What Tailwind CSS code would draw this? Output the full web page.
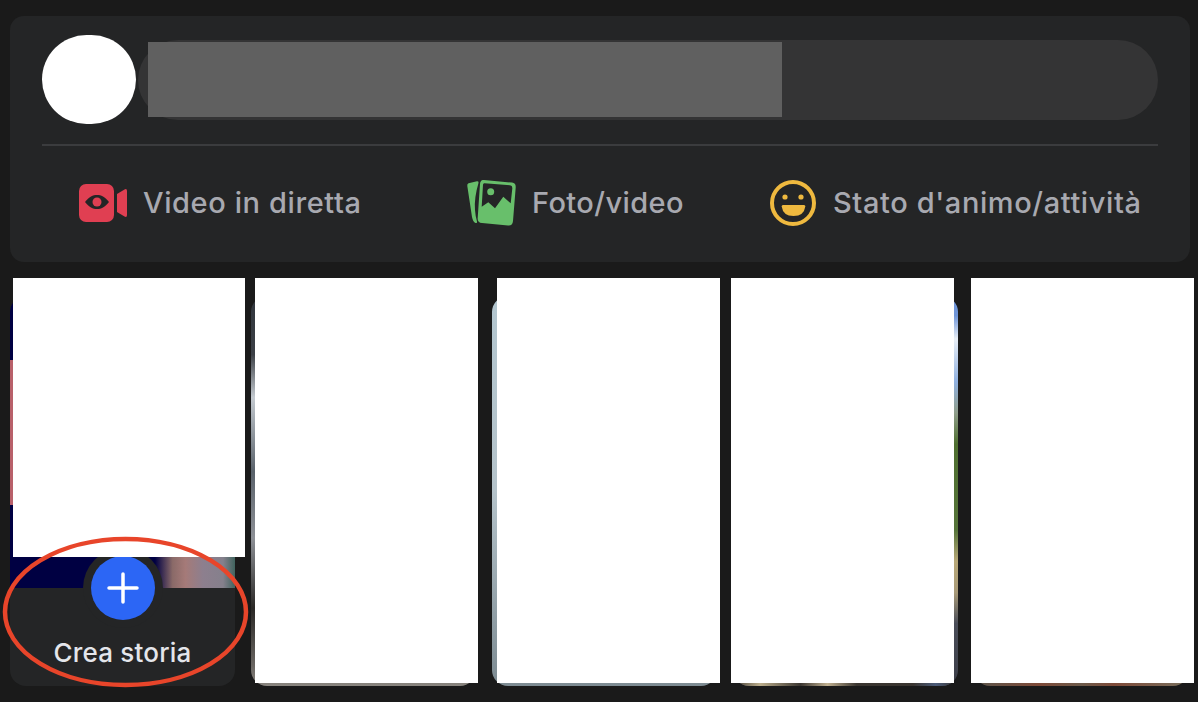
<!DOCTYPE html>
<html lang="it">
<head>
    <meta charset="UTF-8">
    <meta name="viewport" content="width=device-width, initial-scale=1.0">
    <title>Crea storia</title>
    <script src="https://cdn.jsdelivr.net/npm/@tailwindcss/browser@4"></script>
</head>
<body class="bg-[#1a1a1a] font-[Inter,sans-serif] overflow-hidden">
<div class="relative w-[1198px] h-[702px] overflow-hidden pt-4 pl-[10px]">

    <!-- Composer -->
    <div class="w-[1180px] h-[246px] rounded-[14px] bg-[#242526] px-8 pt-[19px]">
        <div class="relative flex items-center">
            <div class="w-[94px] h-[89px] rounded-full bg-white shrink-0"></div>
            <div class="ml-[2px] flex-1 h-[80px] rounded-full bg-[#343435]"></div>
            <div class="absolute left-[106px] top-[7px] w-[634px] h-[75px] bg-[#606060]"></div>
        </div>
        <div class="mt-5 h-[2px] bg-[#3b3c3e]"></div>
        <div class="flex items-center h-[114px] pl-[37px] text-[29px] font-[550] tracking-[0.6px] text-[#a8a9b0]">
            <div class="flex items-center gap-4 w-[388px]">
                <svg class="w-12 h-[38px] shrink-0" viewBox="0 0 48 38" aria-hidden="true">
                    <rect width="35" height="38" rx="7" fill="#e03f52"/>
                    <path d="M38 10 45.500 5.400Q48 4.200 48 7V31Q48 33.800 45.500 32.600L38 28Z" fill="#e03f52"/>
                    <path d="M6 18C10 12.700 14 11 18 11S26 12.700 30 18C26 23.300 22 25 18 25S10 23.300 6 18Z" fill="#242526"/>
                    <circle cx="18" cy="18" r="4.500" fill="#e03f52"/>
                </svg>
                <span>Video in diretta</span>
            </div>
            <div class="flex items-center gap-[16px] w-[303px]">
                <svg class="w-[49px] h-[46px] shrink-0" viewBox="0 0 49 46" aria-hidden="true">
                    <path d="M1.500 3.300 10 1.300Q12 1 11.500 3 7 18 8 30 8.500 37 10 41.500 10.500 43.500 8.500 43 6 42 5 37L.3 6Q0 4 1.500 3.300Z" fill="#68bf6b"/>
                    <path d="M17 0 45 2.600Q49 3 48.700 7.500L46 41Q45.500 46 41 45.500L15 43Q10.300 42.500 10.700 38L13 4Q13.400 -.4 17 0Z" fill="#68bf6b"/>
                    <path d="M17.500 3.200 43 5.300Q45.600 5.500 45.300 8.500L43.700 23.300 36.300 16.700 28 28.300 21.300 22.300 14.700 26.700 16 4.800Q16.100 3 17.500 3.200Z" fill="#242526"/>
                    <circle cx="23.700" cy="11.700" r="3.500" fill="#68bf6b"/>
                </svg>
                <span class="tracking-[0.4px]">Foto/video</span>
            </div>
            <div class="flex items-center gap-[17px]">
                <svg class="w-[46px] h-[46px] shrink-0" viewBox="0 0 46 46" aria-hidden="true">
                    <circle cx="23" cy="23" r="21" fill="none" stroke="#efb93f" stroke-width="4"/>
                    <circle cx="15" cy="17" r="2.600" fill="#efb93f"/>
                    <circle cx="31" cy="17" r="2.600" fill="#efb93f"/>
                    <path d="M13 25H34Q35.500 25 35.300 26.500 34 36 23.500 36T11.700 26.500Q11.500 25 13 25Z" fill="#efb93f"/>
                </svg>
                <span>Stato d'animo/attività</span>
            </div>
        </div>
    </div>

    <!-- Stories -->
    <div class="flex gap-4 mt-[34px] w-[1300px]">
        <div class="relative w-[225px] h-[390px] rounded-[16px] overflow-hidden bg-[#242526] shrink-0">
            <div class="relative h-[292px] bg-[#000042]">
                <div class="absolute left-0 top-[64px] w-[5px] h-[145px] bg-[#b8606a]"></div>
                <div class="absolute right-0 bottom-0 w-[80px] h-[32px] bg-[linear-gradient(90deg,#000042_0%,#8a6a68_22%,#a57a78_38%,#8d7f8e_60%,#85808c_85%,#40645e_100%)]"></div>
            </div>
            <div class="pt-[50px] text-center text-[26px] font-medium tracking-[0.2px] leading-[30px] text-[#e4e6eb]">Crea storia</div>
            <div class="absolute left-[73px] top-[252px] w-20 h-20 rounded-full bg-[#242526] flex items-center justify-center">
                <div class="w-16 h-16 rounded-full bg-[#2c66f5] flex items-center justify-center">
                    <svg class="w-8 h-8" viewBox="0 0 32 32" aria-hidden="true">
                        <path d="M16 2V30M2 16H30" stroke="#fff" stroke-width="3.500" stroke-linecap="round"/>
                    </svg>
                </div>
            </div>
        </div>
        <div class="w-[225px] h-[390px] rounded-[16px] shrink-0 bg-[linear-gradient(180deg,#30353c_0%,#3c4046_15%,#c4cad0_26%,#59616a_45%,#8d9096_62%,#2a2826_80%,#6a6662_95%,#8a8680_100%)]"></div>
        <div class="w-[225px] h-[390px] rounded-[16px] shrink-0 bg-gradient-to-b from-[#b3c6cf] via-[#b5c3ca] to-[#7d8b92]"></div>
        <div class="relative w-[225px] h-[390px] rounded-[16px] overflow-hidden shrink-0 bg-[linear-gradient(180deg,#6f95d8_0%,#6f95d8_5%,#e8eef5_11%,#8fb0e0_22%,#8f9d8a_30%,#4f6f30_38%,#56743a_60%,#b8a878_68%,#a89a78_76%,#4a4d58_84%,#3c3e48_100%)]">
            <div class="absolute left-0 right-0 bottom-0 h-1 bg-[linear-gradient(90deg,#3a3530_0%,#bcae8c_12%,#3a3530_30%,#c0b090_42%,#3a3530_55%,#3a3530_80%,#4a5a78_90%,#3a3530_100%)]"></div>
        </div>
        <div class="w-[215px] h-[390px] rounded-[16px] shrink-0 bg-[linear-gradient(90deg,#5a564c_0%,#7e4a38_30%,#6c5a4a_50%,#7e4a38_65%,#78705e_100%)]"></div>
    </div>

    <!-- Blanked-out story areas -->
    <div class="absolute left-[13px] top-[278px] w-[232px] h-[279px] bg-white"></div>
    <div class="absolute left-[255px] top-[278px] w-[223px] h-[405px] bg-white"></div>
    <div class="absolute left-[497px] top-[278px] w-[223px] h-[405px] bg-white"></div>
    <div class="absolute left-[731px] top-[278px] w-[223px] h-[405px] bg-white"></div>
    <div class="absolute left-[971px] top-[278px] w-[223px] h-[405px] bg-white"></div>

    <!-- Hand-drawn highlight -->
    <svg class="absolute left-0 top-[530px] w-[256px] h-[165px] pointer-events-none" viewBox="0 0 256 165" aria-hidden="true">
        <ellipse cx="125.500" cy="82" rx="120.500" ry="73" fill="none" stroke="#e8452a" stroke-width="4.500"/>
    </svg>
</div>
</body>
</html>
